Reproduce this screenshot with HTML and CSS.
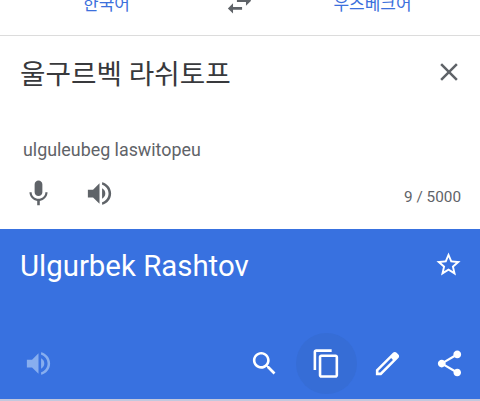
FILE: index.html
```html
<!DOCTYPE html>
<html lang="ko">
<head>
<meta charset="utf-8">
<title>번역</title>
<link rel="stylesheet" href="styles.css">
</head>
<body>
<main class="app">
  <header class="languages">
    <span class="lang">한국어</span>
    <svg class="icon swap" viewBox="0 0 24 24"><path d="M6.99 11L3 15l3.99 4v-3H14v-2H6.99v-3zM21 9l-3.99-4v3H10v2h7.01v3L21 9z"/></svg>
    <span class="lang">우즈베크어</span>
  </header>
  <section class="source">
    <div class="row">
      <div class="source-text">울구르벡 라쉬토프</div>
      <svg class="icon close" viewBox="0 0 24 24"><path d="M19 6.41L17.59 5 12 10.59 6.41 5 5 6.41 10.59 12 5 17.59 6.41 19 12 13.41 17.59 19 19 17.59 13.41 12z"/></svg>
    </div>
    <div class="romanized">ulguleubeg laswitopeu</div>
    <div class="tools">
      <svg class="icon" viewBox="0 0 24 24"><path d="M12 14c1.66 0 2.99-1.34 2.99-3L15 5c0-1.66-1.34-3-3-3S9 3.34 9 5v6c0 1.66 1.34 3 3 3zm5.3-3c0 3-2.54 5.1-5.3 5.1S6.7 14 6.7 11H5c0 3.41 2.72 6.23 6 6.72V21h2v-3.28c3.28-.48 6-3.3 6-6.72h-1.7z"/></svg>
      <svg class="icon" viewBox="0 0 24 24"><path d="M3 9v6h4l5 5V4L7 9H3zm13.5 3c0-1.77-1.02-3.29-2.5-4.03v8.05c1.48-.73 2.5-2.25 2.5-4.02zM14 3.23v2.06c2.89.86 5 3.54 5 6.71s-2.11 5.85-5 6.71v2.06c4.01-.91 7-4.49 7-8.77s-2.99-7.86-7-8.77z"/></svg>
      <span class="count">9 / 5000</span>
    </div>
  </section>
  <section class="result">
    <div class="row">
      <div class="result-text">Ulgurbek Rashtov</div>
      <svg class="icon star" viewBox="0 0 24 24"><path d="M22 9.24l-7.19-.62L12 2 9.19 8.63 2 9.24l5.46 4.73L5.82 21 12 17.27 18.18 21l-1.63-7.03L22 9.24zM12 15.4l-3.76 2.27 1-4.28-3.32-2.88 4.38-.38L12 6.1l1.71 4.04 4.38.38-3.32 2.88 1 4.28L12 15.4z"/></svg>
    </div>
    <div class="actions">
      <svg class="icon muted" viewBox="0 0 24 24"><path d="M3 9v6h4l5 5V4L7 9H3zm13.5 3c0-1.77-1.02-3.29-2.5-4.03v8.05c1.48-.73 2.5-2.25 2.5-4.02zM14 3.23v2.06c2.89.86 5 3.54 5 6.71s-2.11 5.85-5 6.71v2.06c4.01-.91 7-4.49 7-8.77s-2.99-7.86-7-8.77z"/></svg>
      <span class="action"><svg class="icon" viewBox="0 0 24 24"><path d="M15.5 14h-.79l-.28-.27C15.41 12.59 16 11.11 16 9.5 16 5.91 13.09 3 9.5 3S3 5.91 3 9.5 5.91 16 9.5 16c1.61 0 3.09-.59 4.23-1.57l.27.28v.79l5 4.99L20.49 19l-4.99-5zm-6 0C7.01 14 5 11.99 5 9.5S7.01 5 9.5 5 14 7.01 14 9.5 11.99 14 9.5 14z"/></svg></span>
      <span class="action pressed"><svg class="icon" viewBox="0 0 24 24"><path d="M16 1H4c-1.1 0-2 .9-2 2v14h2V3h12V1zm3 4H8c-1.1 0-2 .9-2 2v14c0 1.1.9 2 2 2h11c1.1 0 2-.9 2-2V7c0-1.1-.9-2-2-2zm0 16H8V7h11v14z"/></svg></span>
      <span class="action"><svg class="icon" viewBox="0 0 24 24"><path fill-rule="evenodd" d="M20.41 4.94l-1.35-1.35c-.78-.78-2.05-.78-2.83 0L3 16.82V21h4.18L20.41 7.77c.79-.78.79-2.05 0-2.83zM6.41 19.06L5 19v-1.36l9.82-9.82 1.41 1.41-9.82 9.83z"/></svg></span>
      <span class="action"><svg class="icon" viewBox="0 0 24 24"><path d="M18 16.08c-.76 0-1.44.3-1.96.77L8.91 12.7c.05-.23.09-.46.09-.7s-.04-.47-.09-.7l7.05-4.11c.54.5 1.25.81 2.04.81 1.66 0 3-1.34 3-3s-1.34-3-3-3-3 1.34-3 3c0 .24.04.47.09.7L8.04 9.81C7.5 9.31 6.79 9 6 9c-1.66 0-3 1.34-3 3s1.34 3 3 3c.79 0 1.5-.31 2.04-.81l7.12 4.16c-.05.21-.08.43-.08.65 0 1.61 1.31 2.92 2.92 2.92s2.92-1.31 2.92-2.92-1.31-2.92-2.92-2.92z"/></svg></span>
    </div>
  </section>
</main>
</body>
</html>
```
FILE: styles.css
```css
* { box-sizing: border-box; }
body {
  margin: 0;
  background: #fff;
  font-family: Roboto, "Noto Sans CJK KR", sans-serif;
}
.app {
  height: 401px;
  overflow: hidden;
  display: flex;
  flex-direction: column;
  background: #c3c8de;
}
.icon {
  width: 31px;
  height: 31px;
  flex: none;
  display: block;
  fill: currentColor;
}
.languages {
  height: 36px;
  background: #fff;
  border-bottom: 1px solid #dcdcdc;
  display: grid;
  grid-template-columns: 213px 53px 213px;
  justify-items: center;
  align-items: start;
  color: #5f6368;
}
.lang {
  margin-top: -8px;
  font-size: 17px;
  line-height: 24px;
  color: #3c70dc;
}
.swap { margin-top: -11px; }
.source {
  height: 193px;
  padding: 21px 16px 0 20px;
  background: #fff;
  color: #5f6368;
}
.row {
  display: flex;
  justify-content: space-between;
}
.source-text {
  font-size: 27.7px;
  line-height: 36px;
  color: #38393c;
}
.close {
  width: 30px;
  height: 30px;
}
.romanized {
  margin: 46px 0 0 3px;
  font-size: 17.85px;
  line-height: 22px;
}
.tools {
  display: flex;
  align-items: center;
  gap: 30px;
  margin: 17px 3px 0 3px;
}
.count {
  margin-left: auto;
  padding-top: 7px;
  font-size: 15.3px;
  line-height: 20px;
}
.result {
  height: 170px;
  padding: 21px 0 0 20px;
  background: #3871e0;
  color: #fff;
}
.result-text {
  font-size: 29.4px;
  line-height: 32px;
}
.star {
  width: 29px;
  height: 29px;
  margin-right: 17px;
}
.actions {
  display: flex;
  align-items: center;
  margin: 51px 0 0 3px;
}
.muted {
  margin-right: auto;
  color: #87aeef;
}
.action {
  width: 61.5px;
  height: 61px;
  display: grid;
  place-items: center;
  border-radius: 50%;
}
.pressed { background: #366dd6; }
```
